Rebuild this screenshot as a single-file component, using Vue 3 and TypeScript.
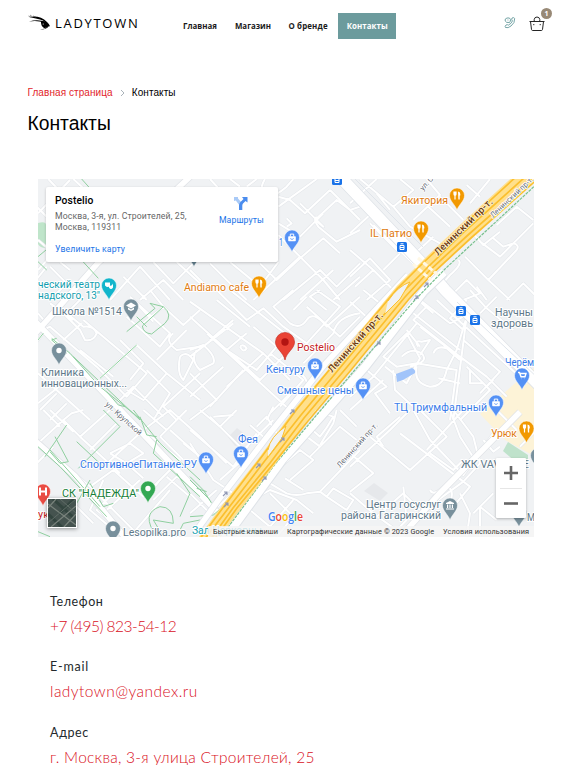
<script setup lang="ts">
interface Street { x: number; y: number; d: string }
interface Pin { x: number; y: number; color: string; kind: string }
interface Label { x: number; y: number; w: number; text: string; tone: string; size?: number }

const nav = ['Главная', 'Магазин', 'О бренде', 'Контакты']

// Each street group is drawn in thirds of a map pixel from its own origin.
const streets: Street[] = [
  { x: 30, y: 170, d: 'M24 130L120 30M55 27L100 75M130 27L160 55M20 110L60 150M24 300L70 250M50 290L10 340M60 390L110 340L60 290M240 390L330 290L420 390M330 390L400 330L460 390M370 276L430 340L510 260M280 320L350 390M440 276L510 340M120 300L90 276M24 210L60 240' },
  { x: 190, y: 170, d: 'M60 27L90 60M120 27L150 50M200 27L170 50M225 27Q205 60 225 75Q250 85 290 50L310 27M265 110L380 27M265 80L300 90L345 130L420 60M420 60L510 150M265 160L330 200L400 130M330 100L400 170L375 150L440 90L480 120L510 110M380 140Q370 150 385 170L440 215L510 180M265 195L400 330L450 390M0 300L60 360M60 280L170 390M120 276L210 350L265 276M210 280L260 330L330 265M330 265L400 205L450 250M190 390L330 260M280 390L390 300L440 350L510 280M330 390L430 300M290 145L305 160L290 170M430 390L510 320' },
  { x: 350, y: 170, d: 'M0 100L80 27M30 27L130 110L190 60L150 27M80 70L120 120M130 110L180 170M190 150L270 75L230 27M180 170L270 220M235 110L300 170M270 80L340 150M360 180L400 225L450 185M360 100L420 27M350 45L390 80M0 190L65 130M60 160L150 250M150 225L190 255L250 200M170 330L210 300L70 165M0 240L70 300L130 360M0 320L60 265L120 330L50 390M15 350L70 300M150 250L100 300M270 350L300 315Q340 280 325 270M250 310L310 370L350 330L390 370L340 390M345 260L415 330L500 240Q510 225 490 220L460 230L430 205M390 215L450 260L550 160M440 165L500 110L550 150M415 330L480 390M380 350L410 390M470 390L520 340L570 390' },
  { x: 30, y: 290, d: 'M24 70L50 100L90 60L150 120L165 150Q190 155 200 130Q190 105 160 110L110 70L160 20M60 40L130 90M20 130L60 110L200 230L290 320L350 250L160 90M0 180L40 130M100 150L155 100M150 180L250 260M210 265L320 165L410 250L510 330M360 0L400 50L460 105L510 60M300 20L420 130L390 170L290 80M400 50L340 100M270 150L340 220L300 270M410 250L340 330L290 300M430 130Q400 150 440 180L510 170M320 40L370 95M380 210L470 120M24 250L180 390M80 310L30 360M110 340L60 390M250 350L310 290L400 380M350 240L420 310L370 390M450 200Q440 250 460 270L490 210Q470 180 450 200M510 250L400 350L440 390M24 340L100 280' },
  { x: 190, y: 290, d: 'M0 35L220 190L300 270M80 0L170 90L220 55L280 110L350 160L450 50L380 0M120 0L310 150M310 0L250 50L300 100Q330 120 350 90Q370 60 410 110L510 20M350 50L450 140L510 80M410 60L360 20L390 0M130 100L0 200M190 110L260 170L200 240L110 180L170 130M80 30L180 110M310 60L350 20M220 190L110 290M0 80L210 270L280 200M50 130L310 370M240 190L340 270L270 350M160 240L60 350M100 230L0 320M0 250L80 330L0 390M20 180Q0 210 30 240L70 220Q80 200 40 165L0 180M60 150L130 90M150 170Q160 160 170 175Q160 190 150 170M310 240Q380 270 330 320M510 70Q440 80 430 130L340 220M250 350L230 390M70 380L130 375M240 370L300 310' },
  { x: 350, y: 290, d: 'M0 35L60 90L190 0M40 0L90 40M180 0L230 50L190 90L330 200L410 260L470 320M260 30L400 160L530 280M210 30L300 100L340 80M190 70L330 180M240 0L210 35L250 70M0 320L70 260L200 100M50 240L110 290L75 310L120 370M105 230L170 280L210 205L170 130L100 200L140 230L200 220L320 240L300 390M155 200Q185 170 215 190Q240 215 180 230M200 230Q190 280 240 290Q280 290 290 240L320 180L350 80L310 390M205 170Q190 150 215 155L240 150L210 195M250 190Q260 165 290 175L330 210M170 120L210 170M210 110L340 210M340 150L450 245L390 310M130 240L135 300L190 350M0 360L100 270M350 230L420 300L330 390M360 240L360 280L400 280M410 290L430 270M265 265L330 280M350 30L300 85L340 120M360 0L410 55L490 120M440 20L390 70' },
  { x: 30, y: 410, d: 'M24 100L100 30L150 80L270 190M0 70L110 170L180 230L290 340L330 380M40 0L90 50M60 0L130 65M100 30L125 10L160 0M150 80L240 0M180 120L260 40M220 170L340 60L450 150L390 210L350 260M240 130L300 100L340 130L290 160L240 130M290 160L340 205M0 180L70 110M220 210L180 300L250 360M180 230L250 180L340 260L420 180M250 250L200 300L250 340M340 60L420 0L510 80M390 80L470 0M420 60L510 140M340 0L410 60M370 270L440 200L510 240M410 200L480 260M300 380L420 240M230 300L330 210M120 270L190 340M460 100L510 140M390 80L460 150' },
  { x: 190, y: 410, d: 'M30 0L90 50L140 0M0 60L130 170L200 70M60 20L160 120L250 30M180 45L220 80M200 50L230 20L260 70M0 100L70 210L130 250L60 310M30 80L110 160M90 210L180 130M190 180L240 220L290 250Q320 260 350 250L390 245L510 120M285 205L340 240M260 180L330 120L370 150L300 210M330 65L390 110L450 50L500 90M350 45L390 80Q410 55 430 20L370 0M440 0L430 40L390 105M450 0L500 50M360 140L390 110M390 245L410 260L470 300L490 270L430 235L410 260M150 290L240 240L320 270L370 310M180 300L240 350L310 270M90 330L150 380M240 250L310 320L260 380M0 250L60 310M0 310L80 240' },
  { x: 350, y: 410, d: 'M0 170L120 60L180 0M60 80L180 180L290 80L210 0M0 245L70 190L0 130M150 70L360 230L310 290M190 0L240 90L340 195L430 70M100 110L80 80L150 20M230 120L340 0M300 0L330 80L375 150M310 0L370 80L390 160L340 215L250 280M160 380L250 260L330 190M80 320L160 250L230 320M240 240Q250 260 280 230Q310 230 305 260L300 300M350 380L360 310L330 250M370 310L430 250M390 380L390 290L440 330M400 90L430 125L450 110M240 130L310 180L340 150M160 230L170 330L120 380M0 250L70 310L180 390M510 110L570 50M440 0L500 60' },
]

const greens: Street[] = [
  { x: 30, y: 170, d: 'M155 27L180 55M160 276L205 325M24 260L60 230M24 275L50 300' },
  { x: 30, y: 290, d: 'M290 125L375 55L360 40L400 50Q430 75 405 100L365 132Q340 130 337 108L400 50M320 80L350 110M65 145L120 190L210 290L335 390M80 145L65 150L110 190M130 200L330 390M210 265L320 165M0 180L40 130M230 305L265 345L285 350' },
  { x: 30, y: 410, d: 'M24 110L90 170L230 320M60 120L140 210L210 290M45 140L110 45M75 80L115 155L90 160L60 125M220 0L270 50L145 175M140 95L220 170M310 0L390 100L510 210M330 20L350 75L380 80M380 90L370 130L510 260M180 220L220 290L250 280M100 350L180 210M440 190L480 250L450 320M380 380Q330 310 390 290Q430 290 430 340L370 330L400 380M440 380L460 340L510 330M0 355L60 380' },
  { x: 190, y: 410, d: 'M0 200L40 240L65 280M0 210L60 270M20 235L50 245M0 320L70 315L110 280' },
  { x: 350, y: 170, d: 'M370 170L230 310L150 390M370 170L375 180' },
]

const pins: Pin[] = [
  { x: 109, y: 300, color: '#12b5cb', kind: 'mask' }, { x: 131, y: 321, color: '#78909c', kind: 'school' },
  { x: 59, y: 365, color: '#78909c', kind: 'dot' }, { x: 292, y: 252, color: '#5491f5', kind: 'bag' },
  { x: 259, y: 298, color: '#f29900', kind: 'food' }, { x: 457, y: 210, color: '#f29900', kind: 'food' },
  { x: 421, y: 243, color: '#f29900', kind: 'food' }, { x: 315, y: 380, color: '#5491f5', kind: 'bag' },
  { x: 363, y: 400, color: '#5491f5', kind: 'bag' }, { x: 522, y: 390, color: '#5491f5', kind: 'cart' },
  { x: 496, y: 417, color: '#5491f5', kind: 'bag' }, { x: 526.5, y: 443, color: '#f29900', kind: 'food' },
  { x: 206, y: 474, color: '#5491f5', kind: 'bag' }, { x: 241, y: 468, color: '#5491f5', kind: 'bag' },
  { x: 148, y: 503, color: '#34a853', kind: 'dot' }, { x: 43, y: 506, color: '#ea4c43', kind: 'hotel' },
  { x: 450, y: 520, color: '#78909c', kind: 'hall' }, { x: 113, y: 543, color: '#78909c', kind: 'dot' },
  { x: 519, y: 527, color: '#78909c', kind: 'dot' }, { x: 194, y: 267, color: '#607d8b', kind: 'dot' },
  { x: 538, y: 470, color: '#78909c', kind: 'dot' },
]

const labels: Label[] = [
  { x: 38, y: 288, w: 62, text: 'ческий театр', tone: 'teal' }, { x: 38, y: 299, w: 62, text: 'надского, 13"', tone: 'teal' },
  { x: 52, y: 315, w: 70, text: 'Школа №1514', tone: 'grey' }, { x: 41, y: 376, w: 43, text: 'Клиника', tone: 'grey' },
  { x: 41, y: 387, w: 86, text: 'инновационных...', tone: 'grey' }, { x: 184, y: 291, w: 65, text: 'Andiamo cafe', tone: 'orange' },
  { x: 401, y: 204, w: 47, text: 'Якитория', tone: 'orange' }, { x: 370, y: 237, w: 42, text: 'IL Патио', tone: 'orange' },
  { x: 297, y: 351, w: 38, text: 'Postelio', tone: 'red' }, { x: 266, y: 373, w: 39, text: 'Кенгуру', tone: 'blue' },
  { x: 277, y: 394, w: 77, text: 'Смешные цены', tone: 'blue' }, { x: 505, y: 366, w: 29, text: 'Черём', tone: 'blue' },
  { x: 394, y: 411, w: 93, text: 'ТЦ Триумфальный', tone: 'blue' }, { x: 491, y: 437, w: 26, text: 'Урюк', tone: 'orange' },
  { x: 495, y: 316, w: 38, text: 'Научны', tone: 'grey' }, { x: 491, y: 327, w: 42, text: 'здоровь', tone: 'grey' },
  { x: 238, y: 443, w: 20, text: 'Фея', tone: 'blue' }, { x: 80, y: 468, w: 117, text: 'СпортивноеПитание.РУ', tone: 'blue' },
  { x: 62, y: 497, w: 77, text: 'СК "НАДЕЖДА"', tone: 'green' }, { x: 38, y: 518, w: 11, text: 'ук', tone: 'red' },
  { x: 123, y: 536, w: 63, text: 'Lesopilka.pro', tone: 'grey' }, { x: 192, y: 534, w: 70, text: 'Зал Церковны', tone: 'teal' },
  { x: 366, y: 508, w: 75, text: 'Центр госуслуг', tone: 'grey' }, { x: 341, y: 519, w: 100, text: 'района Гагаринский', tone: 'grey' },
  { x: 461, y: 468, w: 68, text: 'ЖК VAVILOVE', tone: 'grey' }, { x: 527, y: 521, w: 8, text: 'М', tone: 'grey' },
  { x: 279, y: 246, w: 4, text: '1', tone: 'blue' },
]

const metros = [[337, 180], [402, 247], [461, 311], [475, 320]]
const avenue = 'M205 543L230 509L265 464L303 412L345 363L403 292L428 267L466 231L535 168'
const arrows = [[225, 494], [264, 479], [226, 505], [258, 466], [282, 440], [292, 412], [378, 344], [416, 298], [426, 285]]

const contacts = [
  { title: 'Телефон', value: '+7 (495) 823-54-12', cls: 'phone' },
  { title: 'E-mail', value: 'ladytown@yandex.ru', cls: 'mail' },
  { title: 'Адрес', value: 'г. Москва, 3-я улица Строителей, 25', cls: 'address' },
]
</script>

<template>
  <div class="page">
    <header class="header">
      <a class="logo">
        <svg class="eye" viewBox="0 0 23 17">
          <path d="M1 3Q12 1 19 8Q22 11 22 13Q18 7 12 5.500Q7 4 1 3Z" fill="#000" />
          <path d="M2 1L4 2.500M.5 2L3 3M5 2L8 3" stroke="#555" stroke-width=".6" />
          <path d="M1 7.500Q10 5 18 8Q22 11 21 12Q18 16 12 15.500Q18 15 20 12Q19 9 16 8.500Q9 6 1 7.500Z" fill="#000" />
          <path d="M13 7Q20 7 21 11.500Q19 14.500 16 14Q12.500 12 13 7Z" /><circle cx="15.200" cy="10" r=".6" fill="#fff" />
        </svg>
        <span>LADYTOWN</span>
      </a>
      <nav class="nav">
        <a v-for="(item, i) in nav" :key="item" :class="{ active: i === 3 }"><span>{{ item }}</span></a>
      </nav>
      <div class="tools">
        <svg class="call" viewBox="0 0 12 12" fill="none" stroke="#679b9d" stroke-width=".9">
          <path d="M8 1Q10 0 10.700 1.500Q11 6 7 9Q4 11.500 1.500 10.500Q.5 9.500 2 8Q3.500 7.200 4.300 8.200Q7.500 6.500 8.400 4Q7.200 2.500 8 1Z" />
          <path d="M5.500 5.500Q2 6 1.200 4Q.5 1.500 3 1Q6 .2 6.500 2.500Q6.800 4 5.500 5.500Z" /><path d="M3 3h.5M4.600 3h.5" />
        </svg>
        <div class="cart">
          <svg viewBox="0 0 16 16" fill="none" stroke="#252525" stroke-width="1">
            <path d="M.5 5.500h15M1.500 5.500L2.500 13.500Q2.700 14.500 3.700 14.500h8.600Q13.300 14.500 13.500 13.500L14.500 5.500M5.200 5.500V3.500Q5.500 1 8 1Q10.500 1 10.800 3.500V5.500" /><path d="M4.800 8v1.200M11.200 8v1.200" />
          </svg>
          <b class="badge">1</b>
        </div>
      </div>
    </header>

    <div class="crumbs"><a>Главная страница</a><svg viewBox="0 0 5 8"><path d="M1 1L4 4L1 7" fill="none" stroke="#aab3ba" /></svg><span>Контакты</span></div>
    <h1>Контакты</h1>

    <section class="map">
      <svg class="canvas" viewBox="38 179 496 358">
        <defs>
          <path id="pin-shape" d="M0 0C-1.500-5-7.500-9-7.500-14.500A7.500 7.500 0 0 1 7.500-14.500C7.500-9 1.500-5 0 0Z" />
        </defs>
        <rect x="38" y="179" width="496" height="358" fill="#f0f2f4" />
        <path d="M38 223Q46 221 46 225V248Q40 248 38 244Z" fill="#bfe5ca" />
        <path d="M534 368L522 377L492 404L480 414L505 440L534 456Z" fill="#fdf3d7" />
        <path d="M508 442L528 455V463L522 467L503 451Z" fill="#bfe2cb" />
        <path d="M364 491L374 483L388 493L380 501ZM228 437L237 428L247 436L242 444L235 446Z" fill="#e6e8eb" />
        <g v-for="(s, i) in streets" :key="'c' + i" :transform="`translate(${s.x} ${s.y}) scale(.33333)`">
          <path :d="s.d" class="casing" />
        </g>
        <g v-for="(s, i) in streets" :key="'s' + i" :transform="`translate(${s.x} ${s.y}) scale(.33333)`">
          <path :d="s.d" class="street" />
        </g>
        <g class="major-edge"><path d="M32 337L98 263L194 173M32 318L106 395L218 513M32 438L75 476L127 540M520 412L440 493L395 543" /></g>
        <g class="major"><path d="M32 337L98 263L194 173M32 318L106 395L218 513M32 438L75 476L127 540M520 412L440 493L395 543" /></g>
        <g v-for="(s, i) in greens" :key="'g' + i" :transform="`translate(${s.x} ${s.y}) scale(.33333)`">
          <path :d="s.d" class="trail" />
        </g>
        <path d="M328 164L430 272L445 290L540 386" stroke="#dfe3e8" stroke-width="13" fill="none" />
        <path d="M328 164L430 272L445 290L540 386" stroke="#fff" stroke-width="11.500" fill="none" />
        <path d="M350 174L423 247M457 302L540 380" stroke="#dde2e9" stroke-width=".9" fill="none" />
        <g fill="none">
          <path d="M194 534L220 498L267 437L326 363L408 275" stroke="#dfe3e8" stroke-width="7" />
          <path d="M194 534L220 498L267 437L326 363L408 275" stroke="#fff" stroke-width="5.500" />
          <path d="M218 548L283 459L365 367L424 291L444 272" stroke="#dfe3e8" stroke-width="10" />
          <path d="M218 548L283 459L365 367L424 291L444 272" stroke="#fff" stroke-width="8" />
          <path d="M223 534L276 463L354 371L414 301L446 268L540 181" stroke="#78c18e" stroke-width="1.200" stroke-dasharray="3 1" />
          <path :d="avenue" stroke="#ffe08c" stroke-width="17" />
          <path d="M199 540L225 505L263 455L297 409L340 357L397 289L423 263L460 228L530 164M204 540L230 506L267 458L301 415L344 363L402 293L428 267L465 231L534 169M208 543L233 508L270 463L304 418L347 367L405 297L430 270L468 235L538 173M212 543L237 508L274 463L308 421L351 370L409 299L433 273L471 238L541 176" stroke="#fbbf2e" stroke-width="1.700" />
          <path d="M268 450Q270 437 286 426L282 438L268 457M388 301Q398 286 410 282L400 299L385 314" fill="#f0f2f4" stroke="#fbc02d" stroke-width="1" />
          <path d="M418 258L438 275M413 264L431 280" stroke="#fff8e5" stroke-width="3" stroke-dasharray="5 2" />
        </g>
        <path d="M396 374L412 368Q416 370 415 373L403 380L397 382Z" fill="#a1c4fa" />
        <g class="arrows"><path v-for="(a, i) in arrows" :key="i" :transform="`translate(${a[0]} ${a[1]})`" d="M-2 2L2-2M-1-2H2V1" /></g>

        <g class="road-name">
          <text transform="translate(438 256) rotate(-44)" textLength="77" class="brown">Ленинский пр-т.</text>
          <text transform="translate(332 373) rotate(-48)" textLength="77" class="brown">Ленинский пр-т.</text>
          <text transform="translate(493 218) rotate(-43)" textLength="56">Ленинский пр-т.</text>
          <text transform="translate(340 468) rotate(-48)" textLength="57">Ленинский пр-т.</text>
          <text transform="translate(105 405) rotate(42)" textLength="46">ул. Крупской</text>
          <text transform="translate(423 191) rotate(-48)" textLength="16">ул. С</text>
        </g>
        <g v-for="(m, i) in metros" :key="'m' + i" :transform="`translate(${m[0]} ${m[1]})`">
          <rect x="-5" y="-5" width="10" height="10" rx="1.500" fill="#1a73e8" /><path d="M-1.500-3.200h3M-2-1.500h4v4h-4ZM-2 .5h4" stroke="#fff" fill="none" />
        </g>
        <g v-for="(p, i) in pins" :key="'p' + i" :transform="`translate(${p.x} ${p.y})`">
          <use href="#pin-shape" :fill="p.color" stroke="#fff" stroke-width=".5" />
          <g transform="translate(0 -14.500)" fill="#fff" stroke="none">
            <circle v-if="p.kind === 'dot'" r="2.700" />
            <g v-else-if="p.kind === 'bag'"><rect x="-3.800" y="-1.200" width="7.600" height="5" rx=".7" /><path d="M-1.700-1V-3.400H1.700V-1" fill="none" stroke="#fff" /><path d="M-1.700 1Q0 3 1.700 1" fill="none" :stroke="p.color" stroke-width=".8" /></g>
            <path v-else-if="p.kind === 'food'" d="M-3.600-4H-.4V-1.500Q-.4 0-1.400 .2V4H-2.600V.2Q-3.600 0-3.600-1.500ZM1-4Q3.300-4 3.300-1.500V0H2.700V4H1.400Z" />
            <path v-else-if="p.kind === 'cart'" d="M-4-3H-2.500L-1 1.200H3L4-2H-2M-1 3h.2M2.600 3h.2" fill="none" stroke="#fff" stroke-width="1.400" />
            <path v-else-if="p.kind === 'school'" d="M-5-1L0-4L5-1L0 2ZM-3 1V3L0 4.500L3 3V1L0 3Z" />
            <path v-else-if="p.kind === 'hall'" d="M-4-1.500V-2.500L0-4.500L4-2.500V-1.500ZM-3-1h1.200V2.500H-3ZM-.6-1H.6V2.500H-.6ZM1.800-1H3V2.500H1.800ZM-4 3H4V4H-4Z" />
            <path v-else-if="p.kind === 'hotel'" d="M-3-4V4M3-4V4M-3 0H3" fill="none" stroke="#fff" stroke-width="2" />
            <path v-else d="M-4-3H1V0Q-1 3-4 0ZM0 0Q3 1 4-2V2Q2 5 0 2Z" />
          </g>
        </g>
        <g transform="translate(285 360)">
          <path d="M0 0C-1.500-8-9.500-11-9.500-18A9.500 9.500 0 0 1 9.500-18C9.500-11 1.500-8 0 0Z" fill="#ea4335" stroke="#c5352b" stroke-width=".7" /><circle cy="-18" r="3.700" fill="#b31412" />
        </g>
        <text v-for="l in labels" :key="l.text + l.y" :x="l.x" :y="l.y" :textLength="l.w" lengthAdjust="spacingAndGlyphs" :class="['place', l.tone]">{{ l.text }}</text>
        <rect x="208" y="526" width="326" height="11" fill="#f5f5f5" opacity=".82" />
        <g class="google">
          <text x="268" y="521" textLength="35" lengthAdjust="spacingAndGlyphs"><tspan fill="#4285f4">G</tspan><tspan fill="#ea4335">o</tspan><tspan fill="#fbbc04">o</tspan><tspan fill="#4285f4">g</tspan><tspan fill="#34a853">l</tspan><tspan fill="#ea4335">e</tspan></text>
        </g>
        <g class="legal">
          <text x="213" y="534" textLength="65">Быстрые клавиши</text>
          <text x="287" y="534" textLength="147">Картографические данные © 2023 Google</text>
          <text x="443" y="534" textLength="86">Условия использования</text>
        </g>
      </svg>

      <div class="info">
        <div class="place-text">
          <strong>Postelio</strong>
          <p>Москва, 3-я, ул. Строителей, 25,<br>Москва, 119311</p>
          <a>Увеличить карту</a>
        </div>
        <div class="route">
          <svg viewBox="0 0 14 15"><path d="M0 1H4V2.500L8 7L6 10L1.800 4.500L0 5Z" fill="#a9caf7" /><path d="M5 14V9.500Q5 7.500 6.500 6L9.500 3L8 1H13.500V6.500L11.500 5L9 7.500Q8.300 8.300 8.300 9.500V14Z" fill="#4a8cee" /></svg>
          <a>Маршруты</a>
        </div>
      </div>
      <div class="satellite">
        <svg viewBox="0 0 28 28"><rect width="28" height="28" fill="#45534f" /><path d="M5 0L25 18M0 15L14 28M26 0L11 15" stroke="#33453f" stroke-width="3" /><path d="M0 5L28 26M3 28L28 7M8 0L0 9M16 28L28 15" stroke="#79837c" stroke-width="1.200" /><path d="M0 24L28 0M12 0L28 14" stroke="#606d67" stroke-width="1" /></svg>
      </div>
      <div class="zoom">
        <svg viewBox="0 0 30 30"><path d="M8 15H22M15 8V22" stroke="#666" stroke-width="2.600" /></svg><i></i>
        <svg viewBox="0 0 30 30"><path d="M8 15.500H22" stroke="#666" stroke-width="2.600" /></svg>
      </div>
    </section>

    <section class="contacts">
      <div v-for="c in contacts" :key="c.title" class="contact">
        <h2 :class="c.cls">{{ c.title }}</h2>
        <a :class="c.cls">{{ c.value }}</a>
      </div>
    </section>
  </div>
</template>

<style>
body { background: #fff; overflow: hidden; }
</style>

<style scoped>
.page { width: 573px; height: 765px; overflow: hidden; box-sizing: border-box; background: #fff; font-family: "Liberation Sans", Arial, sans-serif; color: #000; }
svg { display: block; }
.header { display: flex; height: 53px; padding-left: 28px; }
.logo { display: flex; width: 143px; font-family: "Open Sans", sans-serif; font-size: 13px; letter-spacing: 1.7px; }
.logo span { margin-top: 14px; line-height: 18px; }
.eye { width: 23px; height: 17px; margin: 14px 4px 0 0; flex: none; }
.nav { display: flex; align-items: center; height: 26px; padding-top: 13px; font: 700 7.9px/26px "Open Sans", sans-serif; color: #1b1b1b; }
.nav a { padding: 0 9px; height: 26px; white-space: nowrap; }
.nav a:first-child { margin-left: 3px; }
.nav a:nth-child(2) { padding-right: 8.5px; }
.nav a:nth-child(3) { letter-spacing: .15px; padding-right: 9.5px; }
.nav .active { background: #6c9b9d; color: #fff; margin-left: 1px; padding: 0 8.5px; letter-spacing: .07px; }
.tools { display: flex; margin-left: auto; padding-right: 28px; }
.call { width: 12px; height: 12px; margin-top: 17px; }
.cart { position: relative; width: 16px; height: 16px; margin: 16px 0 0 13px; }
.badge { position: absolute; left: 12px; top: -8px; width: 11px; height: 11px; border-radius: 50%; background: #988976; color: #fff; font: 700 7px/11px "Open Sans", sans-serif; text-align: center; }
.crumbs { display: flex; align-items: center; padding: 32px 0 0 27.5px; height: 15px; font-size: 10px; letter-spacing: .08px; }
.crumbs a { color: #e2252b; }
.crumbs svg { width: 5px; height: 8px; margin: 0 7px 0 7px; }
h1 { margin: 11px 0 0 27.5px; font-size: 19.3px; line-height: 25px; font-weight: 400; }
.map { position: relative; width: 496px; height: 358px; margin: 43px 0 0 38px; overflow: hidden; font-family: Roboto, sans-serif; }
.canvas { width: 496px; height: 358px; }
.casing { fill: none; stroke: #e3e6ea; stroke-width: 9; stroke-linejoin: round; }
.street { fill: none; stroke: #fff; stroke-width: 6; stroke-linejoin: round; }
.major-edge { fill: none; stroke: #e0e3e7; stroke-width: 7; }
.major { fill: none; stroke: #fff; stroke-width: 5.5; }
.trail { fill: none; stroke: #8fcf9f; stroke-width: 3; }
.arrows { fill: none; stroke: #9098b4; stroke-width: 1.1; }
.place { font-family: Roboto, sans-serif; font-size: 10.7px; stroke: #fff; stroke-width: 2px; paint-order: stroke; stroke-linejoin: round; }
.grey { fill: #60798a; } .teal { fill: #129eaf; } .orange { fill: #df7b10; } .blue { fill: #3b7de9; } .red { fill: #c5221f; } .green { fill: #188038; }
.road-name { font-family: Roboto, sans-serif; font-size: 7.5px; fill: #656b76; stroke: #fff; stroke-width: 1.5px; paint-order: stroke; }
.brown { font-size: 9.7px; font-weight: 500; fill: #6b3b13; stroke: #fff1cd; }
.google { font-family: "Open Sans", sans-serif; font-size: 12px; font-weight: 600; stroke: #fff; stroke-width: 1px; paint-order: stroke; }
.legal { font-family: Roboto, sans-serif; font-size: 7.3px; fill: #333; }
.info { position: absolute; left: 8px; top: 8px; display: flex; justify-content: space-between; width: 232px; height: 75px; box-sizing: border-box; padding: 7px 14px 0 9px; background: #fff; border-radius: 2px; box-shadow: 0 1px 3px #0003; }
.place-text strong { display: block; font-size: 10.3px; line-height: 13px; font-weight: 500; letter-spacing: .1px; }
.place-text p { margin: 4px 0 0; color: #666; font-size: 8.7px; letter-spacing: .12px; line-height: 10.5px; white-space: nowrap; }
.info a { font-size: 8.7px; letter-spacing: .13px; color: #1a73e8; line-height: 12px; }
.place-text a { display: block; margin-top: 11px; }
.route { display: flex; flex-direction: column; align-items: center; padding-top: 2px; }
.route svg { width: 14px; height: 15px; margin-bottom: 3px; }
.satellite { position: absolute; left: 9px; top: 319px; width: 28px; height: 28px; border: 1px solid #fff; box-shadow: 0 1px 4px #0006; }
.zoom { position: absolute; left: 458px; top: 279px; width: 30px; height: 60px; background: #fff; border-radius: 1px; box-shadow: 0 1px 3px #0004; }
.zoom i { display: block; height: 1px; margin: 0 4px -1px; background: #e6e6e6; }
.contacts { padding: 56px 0 0 50px; }
.contact { height: 65.4px; font-family: Lato, sans-serif; }
h2 { margin: 0; font-size: 12.5px; line-height: 17px; font-weight: 400; color: #24292d; letter-spacing: .6px; }
h2.mail { letter-spacing: .8px; }
.contact a { display: block; margin-top: 6px; font-size: 15.5px; line-height: 20px; font-weight: 300; color: #d90f1c; white-space: nowrap; }
a.phone { letter-spacing: -.53px; }
a.mail { letter-spacing: .46px; }
a.address { letter-spacing: .26px; }
</style>
